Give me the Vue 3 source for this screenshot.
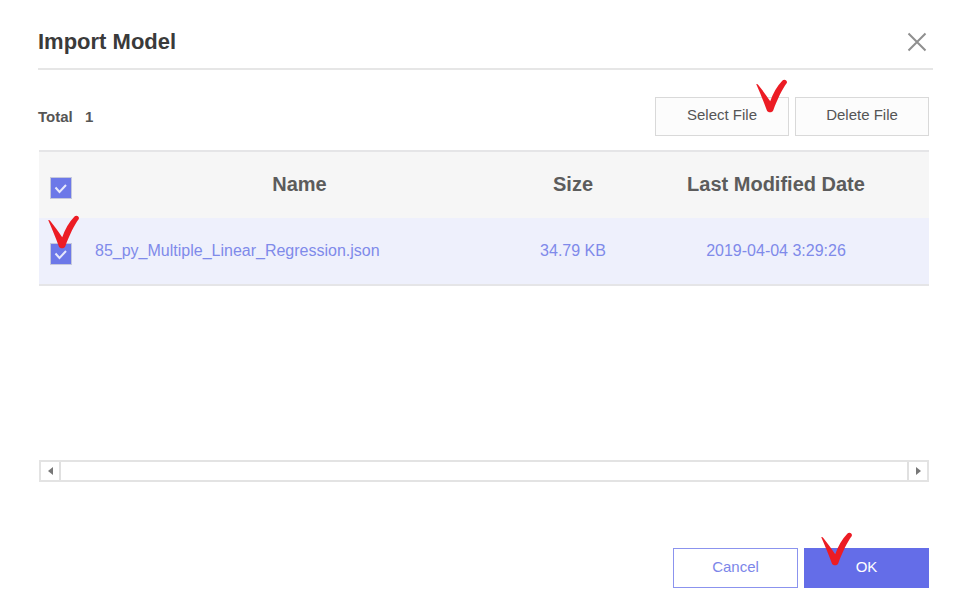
<script setup>
import { ref, computed } from 'vue'

const files = ref([
  { id: 1, name: '85_py_Multiple_Linear_Regression.json', size: '34.79 KB', modified: '2019-04-04 3:29:26', checked: true }
])

// Header checkbox follows the rows and toggles all of them
const allChecked = computed({
  get: () => files.value.length > 0 && files.value.every(file => file.checked),
  set: value => files.value.forEach(file => { file.checked = value })
})

const deleteFiles = () => {
  files.value = files.value.filter(file => !file.checked)
}

// Hand-drawn red tick, tapered on the left and rounded at the top right
const markPath = 'M0.3 5.2 C0.9 4.700 1.700 5.200 2.300 6 C6 10.500 10.500 16.500 14.200 22.300 C17 14.500 21 7 26.500 1.500 C28.200 -0.400 31.800 1.200 30.800 4 C26 10.500 21.500 20 17.300 31.200 C16.300 34 11.800 34 10.800 31.200 C7.200 21.500 4.200 14 0.300 5.200 Z'
</script>

<template>
  <div class="dialog" role="dialog" aria-labelledby="dialog-title">
    <header class="dialog-header">
      <h1 id="dialog-title">Import Model</h1>
      <button type="button" class="btn-close" aria-label="Close">
        <svg width="20" height="20" viewBox="0 0 20 20">
          <path d="M1.500 1.500 L18.500 18.500 M18.500 1.500 L1.500 18.500" fill="none" stroke="#8f8f8f" stroke-width="2" />
        </svg>
      </button>
    </header>

    <main class="dialog-body">
      <div class="toolbar">
        <p class="total">Total <span class="count">{{ files.length }}</span></p>
        <div class="toolbar-actions">
          <button type="button" class="btn">
            Select File
            <svg class="mark mark-select" viewBox="0 0 31 34"><path :d="markPath" /></svg>
          </button>
          <button type="button" class="btn" @click="deleteFiles">Delete File</button>
        </div>
      </div>

      <div class="grid">
        <table>
          <colgroup>
            <col class="col-check">
            <col>
            <col class="col-size">
            <col class="col-date">
          </colgroup>
          <thead>
            <tr>
              <th class="cell-check">
                <label class="checkbox">
                  <input v-model="allChecked" type="checkbox" aria-label="Select all files">
                  <svg viewBox="0 0 22 22"><path d="M5.500 10.500 L9.500 15 L16 8" /></svg>
                </label>
              </th>
              <th>Name</th>
              <th>Size</th>
              <th class="cell-date">Last Modified Date</th>
            </tr>
          </thead>
          <tbody>
            <tr v-for="file in files" :key="file.id">
              <td class="cell-check">
                <label class="checkbox">
                  <input v-model="file.checked" type="checkbox" :aria-label="file.name">
                  <svg viewBox="0 0 22 22"><path d="M5.500 10.500 L9.500 15 L16 8" /></svg>
                  <svg class="mark mark-row" viewBox="0 0 31 34"><path :d="markPath" /></svg>
                </label>
              </td>
              <td class="cell-name">{{ file.name }}</td>
              <td>{{ file.size }}</td>
              <td class="cell-date">{{ file.modified }}</td>
            </tr>
          </tbody>
        </table>

        <div class="scrollbar">
          <button type="button" aria-label="Scroll left">
            <svg width="5" height="8" viewBox="0 0 5 8"><path d="M5 0 L0 4 L5 8 Z" /></svg>
          </button>
          <div class="track"></div>
          <button type="button" aria-label="Scroll right">
            <svg width="5" height="8" viewBox="0 0 5 8"><path d="M0 0 L5 4 L0 8 Z" /></svg>
          </button>
        </div>
      </div>
    </main>

    <footer class="dialog-footer">
      <button type="button" class="btn btn-cancel">Cancel</button>
      <button type="button" class="btn btn-ok">
        OK
        <svg class="mark mark-ok" viewBox="0 0 31 34"><path :d="markPath" /></svg>
      </button>
    </footer>
  </div>
</template>

<style>
body {
  margin: 0;
  background: #fff;
}
</style>

<style scoped>
.dialog {
  box-sizing: border-box;
  min-height: 100vh;
  display: flex;
  flex-direction: column;
  padding: 16px 37px 18px 38px;
  font-family: "Liberation Sans", Arial, sans-serif;
  font-size: 15px;
  color: #555;
}

button {
  font: inherit;
  cursor: pointer;
}

.dialog-header {
  display: flex;
  align-items: center;
  justify-content: space-between;
  height: 52px;
  margin-right: -4px;
  padding-right: 6px;
  border-bottom: 2px solid #e6e6e6;
}

h1 {
  margin: 0;
  font-size: 22px;
  color: #3a3a3a;
}

.btn-close {
  display: flex;
  padding: 0;
  border: 0;
  background: none;
}

.dialog-body {
  flex: 1;
  display: flex;
  flex-direction: column;
}

/* Toolbar */
.toolbar {
  display: flex;
  align-items: center;
  justify-content: space-between;
  padding: 27px 0 14px;
}

.total {
  margin: 0;
  font-size: 15px;
  font-weight: bold;
}

.count {
  margin-left: 8px;
}

.toolbar-actions,
.dialog-footer {
  display: flex;
  gap: 6px;
}

.btn {
  position: relative;
  box-sizing: border-box;
  width: 134px;
  height: 39px;
  padding: 0 0 4px;
  border: 1px solid #d9d9d9;
  background: #fcfcfc;
  color: #555;
}

/* File grid */
.grid {
  flex: 1;
  display: flex;
  flex-direction: column;
  justify-content: space-between;
  padding-left: 1px;
}

table {
  width: 100%;
  table-layout: fixed;
  border-collapse: separate;
  border-spacing: 0;
  border: solid #e5e5e7;
  border-width: 2px 0;
}

.col-check {
  width: 47px;
}

.col-size {
  width: 120px;
}

.col-date {
  width: 296px;
}

th,
td {
  box-sizing: border-box;
  height: 66px;
  padding: 0;
  text-align: center;
}

th {
  padding-bottom: 2px;
  background: #f6f6f6;
  font-size: 20px;
  color: #5c5c5c;
}

td {
  background: #eef0fc;
  font-size: 16px;
  color: #7f8aea;
}

.cell-check {
  padding: 6px 0 0 11px;
}

.cell-name {
  padding-left: 9px;
  text-align: left;
}

.cell-date {
  padding-right: 10px;
}

.checkbox {
  position: relative;
  display: block;
  width: 22px;
  height: 22px;
}

.checkbox input {
  appearance: none;
  box-sizing: border-box;
  display: block;
  width: 22px;
  height: 22px;
  margin: 0;
  border: 1px solid #c5c8dc;
  background: #fff;
}

.checkbox input:checked {
  background: #6c78e8;
}

.checkbox svg {
  position: absolute;
  inset: 0;
  fill: none;
  stroke: #e6e8fc;
  stroke-width: 2;
  pointer-events: none;
}

/* Scrollbar */
.scrollbar {
  display: flex;
  height: 18px;
  border: 2px solid #e3e3e3;
}

.scrollbar button {
  display: flex;
  align-items: center;
  justify-content: center;
  width: 18px;
  padding: 0;
  border: 0;
  background: #fff;
}

.scrollbar path {
  fill: #777;
}

.track {
  flex: 1;
  border: solid #e0e0e0;
  border-width: 0 2px;
}

/* Footer */
.dialog-footer {
  justify-content: flex-end;
  padding-top: 66px;
}

.dialog-footer .btn {
  width: 125px;
  height: 40px;
}

.dialog-footer .btn-cancel {
  border-color: #8b93ee;
  background: #fff;
  color: #7c86e9;
}

.dialog-footer .btn-ok {
  border-color: #646de8;
  background: #646de8;
  color: #fff;
}

/* Red ticks over the controls */
.mark,
.checkbox .mark {
  position: absolute;
  inset: auto;
  z-index: 1;
  width: 31px;
  height: 34px;
  overflow: visible;
  fill: #ec1c24;
  stroke: none;
  pointer-events: none;
}

.mark-select {
  top: -19px;
  left: 100px;
}

.checkbox .mark-row {
  top: -28px;
  left: -2px;
}

.mark-ok {
  top: -17px;
  left: 16px;
}
</style>
